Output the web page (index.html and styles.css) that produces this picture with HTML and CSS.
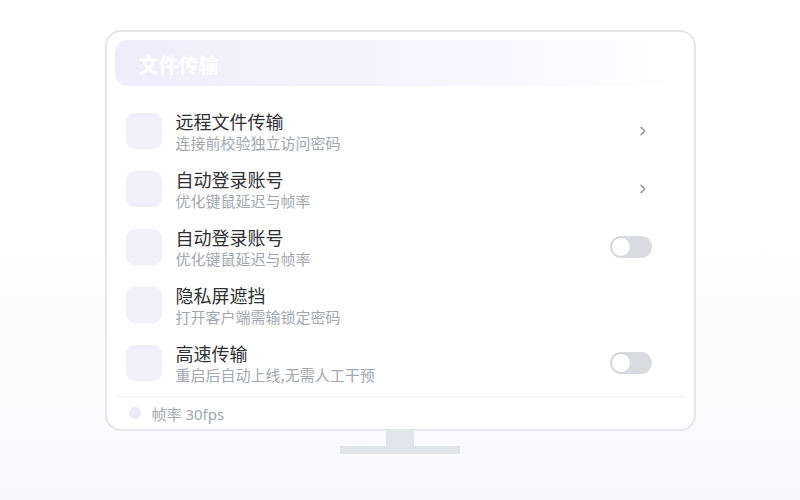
FILE: index.html
```html
<!DOCTYPE html>
<html lang="zh-CN">
<head>
<meta charset="utf-8">
<title>文件传输</title>
<link rel="stylesheet" href="styles.css">
</head>
<body>
<div class="stage">
  <div class="monitor">
    <div class="header">文件传输</div>
    <div class="list">
      <div class="row">
        <div class="icon"></div>
        <div class="text">
          <div class="title">远程文件传输</div>
          <div class="sub">连接前校验独立访问密码</div>
        </div>
        <div class="action">
          <svg class="chev" width="12" height="12" viewBox="0 0 12 12"><path d="M5 2.2 L8.8 6 L5 9.8" fill="none" stroke="#8c919a" stroke-width="1.3" stroke-linecap="round" stroke-linejoin="round"/></svg>
        </div>
      </div>
      <div class="row">
        <div class="icon"></div>
        <div class="text">
          <div class="title">自动登录账号</div>
          <div class="sub">优化键鼠延迟与帧率</div>
        </div>
        <div class="action">
          <svg class="chev" width="12" height="12" viewBox="0 0 12 12"><path d="M5 2.2 L8.8 6 L5 9.8" fill="none" stroke="#8c919a" stroke-width="1.3" stroke-linecap="round" stroke-linejoin="round"/></svg>
        </div>
      </div>
      <div class="row">
        <div class="icon"></div>
        <div class="text">
          <div class="title">自动登录账号</div>
          <div class="sub">优化键鼠延迟与帧率</div>
        </div>
        <div class="action">
          <div class="toggle"><div class="knob"></div></div>
        </div>
      </div>
      <div class="row">
        <div class="icon"></div>
        <div class="text">
          <div class="title">隐私屏遮挡</div>
          <div class="sub">打开客户端需输锁定密码</div>
        </div>
        <div class="action"></div>
      </div>
      <div class="row">
        <div class="icon"></div>
        <div class="text">
          <div class="title">高速传输</div>
          <div class="sub">重启后自动上线,无需人工干预</div>
        </div>
        <div class="action">
          <div class="toggle"><div class="knob"></div></div>
        </div>
      </div>
    </div>
    <div class="footer">
      <span class="dot"></span>
      <span class="fps">帧率 30fps</span>
    </div>
  </div>
  <div class="neck"></div>
  <div class="base"></div>
</div>
</body>
</html>
```

FILE: styles.css
```css
html, body {
  margin: 0;
  padding: 0;
}
body {
  width: 800px;
  height: 500px;
  background: linear-gradient(180deg, #ffffff 0%, #ffffff 35%, #f9f9fb 100%);
  font-family: "Noto Sans", "Noto Sans CJK SC", sans-serif;
  overflow: hidden;
}
.stage {
  padding-top: 30px;
  display: flex;
  flex-direction: column;
  align-items: center;
}
.monitor {
  box-sizing: border-box;
  width: 591px;
  height: 401px;
  border: 2px solid #e4e6ea;
  border-radius: 16px;
  background: #ffffff;
  padding: 8px 8px 0;
  display: flex;
  flex-direction: column;
}
.header {
  box-sizing: border-box;
  height: 46px;
  border-radius: 12px;
  background: linear-gradient(90deg, #efedfc 0%, #f4f3fd 40%, #faf9fe 75%, #ffffff 100%);
  color: #ffffff;
  font-family: "Noto Sans CJK SC", sans-serif;
  font-weight: 700;
  font-size: 20px;
  line-height: 46px;
  padding: 2px 0 0 24px;
}
.list {
  margin-top: 16px;
  display: flex;
  flex-direction: column;
}
.row {
  height: 58px;
  display: flex;
  align-items: center;
  padding: 0 34px 0 11px;
}
.icon {
  width: 36px;
  height: 36px;
  border-radius: 9px;
  background: #f1effc;
  flex: none;
}
.text {
  margin-left: 14px;
  flex: 1;
  display: flex;
  flex-direction: column;
  padding-top: 1px;
}
.title {
  font-family: "Noto Sans CJK SC", sans-serif;
  font-size: 18px;
  line-height: 22px;
  color: #2f3034;
}
.sub {
  font-family: "Noto Sans CJK SC", sans-serif;
  font-size: 15px;
  line-height: 21px;
  color: #a3a7af;
}
.action {
  width: 42px;
  display: flex;
  justify-content: flex-end;
  align-items: center;
}
.chev {
  margin-right: 4px;
  display: block;
}
.toggle {
  box-sizing: border-box;
  width: 42px;
  height: 22px;
  border-radius: 11px;
  background: #d9dbe1;
  padding: 1px;
}
.knob {
  box-sizing: border-box;
  width: 20px;
  height: 20px;
  border-radius: 50%;
  background: #ffffff;
  border: 1px solid #d2d5db;
}
.footer {
  margin-top: 4px;
  border-top: 1px solid #eef0f3;
  flex: 1;
  display: flex;
  align-items: center;
  padding-left: 14px;
  margin-left: 2px;
  margin-right: 2px;
}
.dot {
  width: 12px;
  height: 12px;
  border-radius: 50%;
  background: #ece9fb;
  margin-left: -2px;
}
.fps {
  margin-left: 11px;
  font-size: 15px;
  color: #a3a7af;
}
.neck {
  width: 28px;
  height: 15px;
  background: #e1e4e9;
}
.base {
  width: 120px;
  height: 8px;
  background: #e1e4e9;
}
```
